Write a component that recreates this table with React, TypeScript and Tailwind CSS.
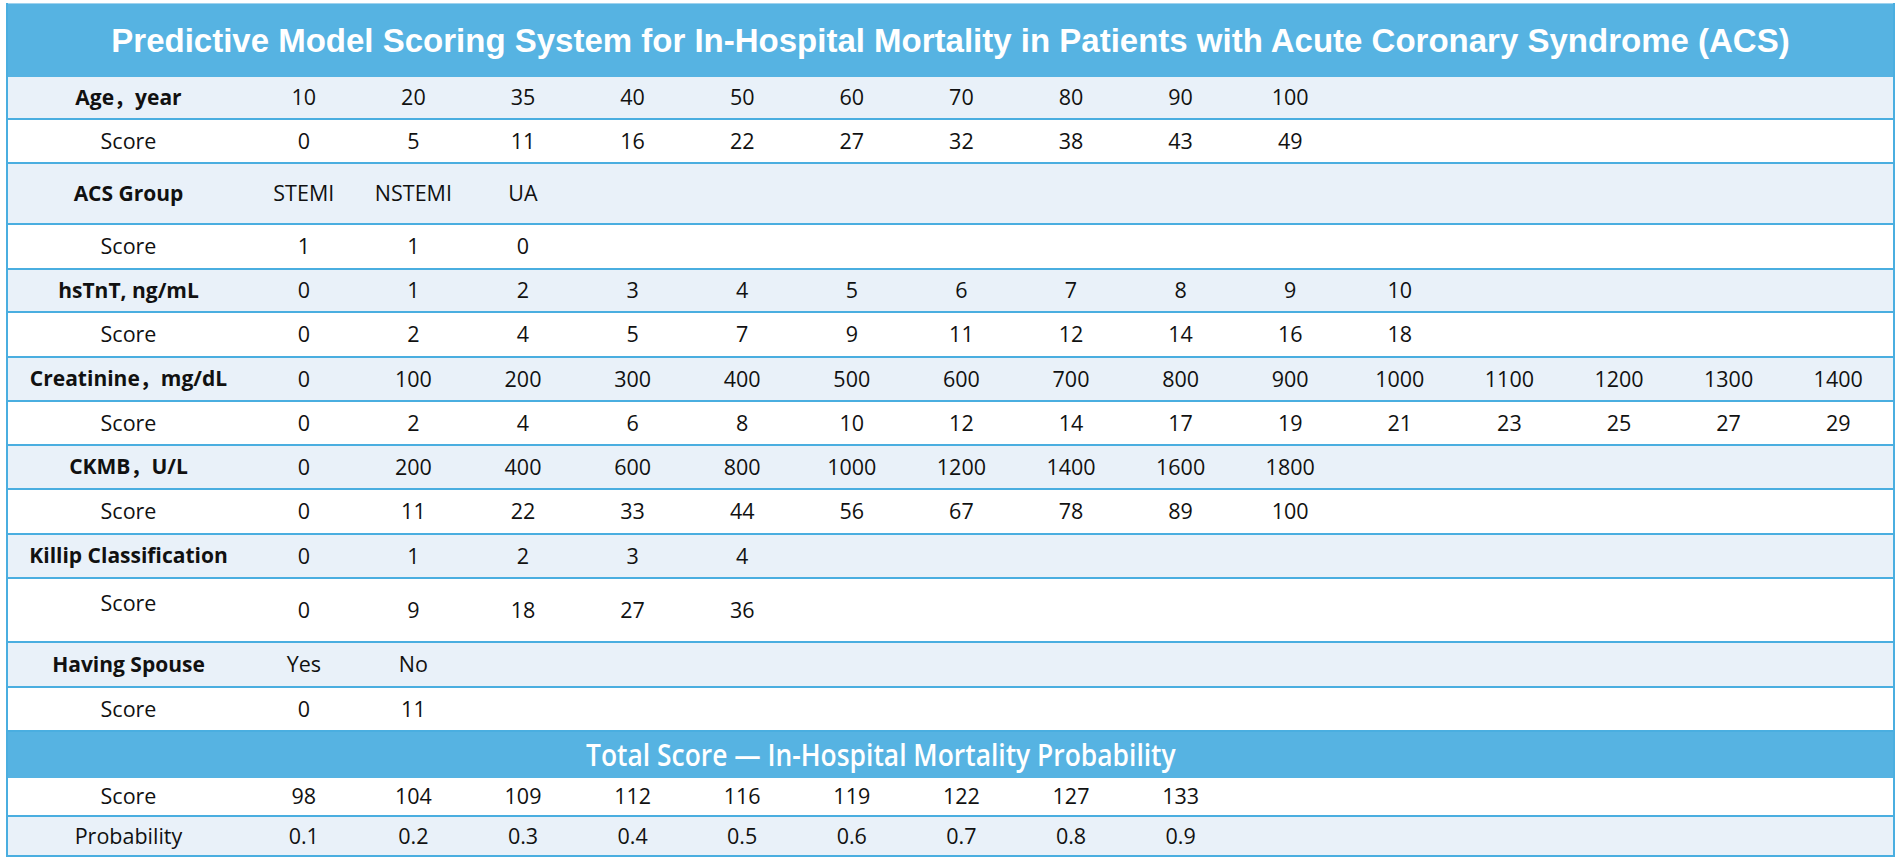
import React from "react";

type Row = {
  label: string;
  values: string[];
  bold?: boolean;
  light?: boolean;
  h: string;
  top?: boolean;
};

const rows: Row[] = [
  { label: "Age，year", values: ["10", "20", "35", "40", "50", "60", "70", "80", "90", "100"], bold: true, light: true, h: "h-[43px]" },
  { label: "Score", values: ["0", "5", "11", "16", "22", "27", "32", "38", "43", "49"], h: "h-[44px]" },
  { label: "ACS Group", values: ["STEMI", "NSTEMI", "UA"], bold: true, light: true, h: "h-[61px]" },
  { label: "Score", values: ["1", "1", "0"], h: "h-[45px]" },
  { label: "hsTnT, ng/mL", values: ["0", "1", "2", "3", "4", "5", "6", "7", "8", "9", "10"], bold: true, light: true, h: "h-[43px]" },
  { label: "Score", values: ["0", "2", "4", "5", "7", "9", "11", "12", "14", "16", "18"], h: "h-[45px]" },
  { label: "Creatinine，mg/dL", values: ["0", "100", "200", "300", "400", "500", "600", "700", "800", "900", "1000", "1100", "1200", "1300", "1400"], bold: true, light: true, h: "h-[44px]" },
  { label: "Score", values: ["0", "2", "4", "6", "8", "10", "12", "14", "17", "19", "21", "23", "25", "27", "29"], h: "h-[44px]" },
  { label: "CKMB，U/L", values: ["0", "200", "400", "600", "800", "1000", "1200", "1400", "1600", "1800"], bold: true, light: true, h: "h-[44px]" },
  { label: "Score", values: ["0", "11", "22", "33", "44", "56", "67", "78", "89", "100"], h: "h-[45px]" },
  { label: "Killip Classification", values: ["0", "1", "2", "3", "4"], bold: true, light: true, h: "h-[44px]" },
  { label: "Score", values: ["0", "9", "18", "27", "36"], h: "h-[64px]", top: true },
  { label: "Having Spouse", values: ["Yes", "No"], bold: true, light: true, h: "h-[45px]" },
  { label: "Score", values: ["0", "11"], h: "h-[44px]" },
];

const totals: Row[] = [
  { label: "Score", values: ["98", "104", "109", "112", "116", "119", "122", "127", "133"], h: "h-[39px]" },
  { label: "Probability", values: ["0.1", "0.2", "0.3", "0.4", "0.5", "0.6", "0.7", "0.8", "0.9"], light: true, h: "h-[40px]" },
];

function TableRow({ r }: { r: Row }) {
  const cells = Array.from({ length: 15 }, (_, i) => r.values[i] ?? "");
  return (
    <div
      className={`grid grid-cols-[241px_repeat(15,minmax(0,1fr))] border-b-2 border-[#4aaee0] ${r.h} ${
        r.light ? "bg-[#e9f1f9]" : "bg-white"
      }`}
    >
      <div
        className={`flex justify-center text-center whitespace-nowrap ${r.top ? "items-start pt-[8px]" : "items-center"} ${
          r.bold ? "font-bold text-[21px]" : "font-normal"
        }`}
      >
        {r.label}
      </div>
      {cells.map((v, i) => (
        <div key={i} className="flex items-center justify-center">
          {v}
        </div>
      ))}
    </div>
  );
}

export default function App() {
  return (
    <div className="w-[1900px] h-[865px] bg-white pt-[3px] pl-[6px] overflow-hidden">
      <div
        className="w-[1889px] border-l-2 border-r-2 border-[#4aaee0] text-[21.5px] text-[#111]"
        style={{ fontFamily: '"Open Sans", "Noto Sans CJK SC", sans-serif' }}
      >
        <div className="h-[74px] bg-[#56b3e2] border-t border-[#9ed2ee] flex items-center justify-center">
          <span
            className="text-white font-bold text-[33px] whitespace-nowrap"
            style={{ fontFamily: '"Liberation Sans", Arial, sans-serif' }}
          >
            Predictive Model Scoring System for In-Hospital Mortality in Patients with Acute Coronary Syndrome (ACS)
          </span>
        </div>
        {rows.map((r, i) => (
          <TableRow key={i} r={r} />
        ))}
        <div className="h-[46px] bg-[#56b3e2] flex items-center pl-[578px]">
          <span className="text-white font-semibold text-[30px] leading-none inline-block origin-left scale-x-[0.88] whitespace-nowrap">
            Total Score — In-Hospital Mortality Probability
          </span>
        </div>
        {totals.map((r, i) => (
          <TableRow key={i} r={r} />
        ))}
      </div>
    </div>
  );
}
